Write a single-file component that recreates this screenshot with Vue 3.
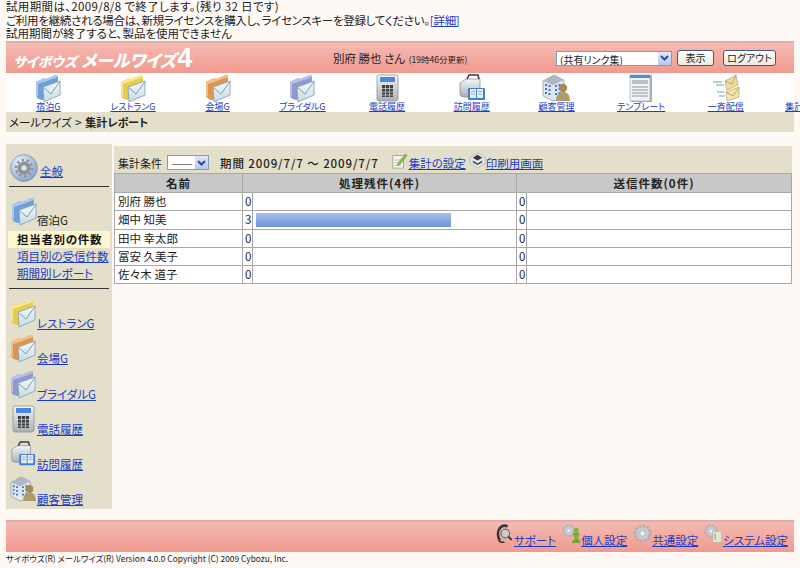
<script setup>
const navItems = [
  { label: '宿泊G', icon: 'folder', tone: 'blue' },
  { label: 'レストランG', icon: 'folder', tone: 'yellow' },
  { label: '会場G', icon: 'folder', tone: 'orange' },
  { label: 'ブライダルG', icon: 'folder', tone: 'purple' },
  { label: '電話履歴', icon: 'phone' },
  { label: '訪問履歴', icon: 'visit' },
  { label: '顧客管理', icon: 'customer' },
  { label: 'テンプレート', icon: 'template' },
  { label: '一斉配信', icon: 'bulk' },
  { label: '集計レポート', icon: 'none' }
]

const sideItems = navItems.slice(1, 7)

const rows = [
  { name: '別府 勝也', pending: 0, sent: 0 },
  { name: '畑中 知美', pending: 3, sent: 0 },
  { name: '田中 幸太郎', pending: 0, sent: 0 },
  { name: '冨安 久美子', pending: 0, sent: 0 },
  { name: '佐々木 道子', pending: 0, sent: 0 }
]
const maxPending = 4

const footerLinks = [
  { label: 'サポート', icon: 'support' },
  { label: '個人設定', icon: 'gear-user' },
  { label: '共通設定', icon: 'gear' },
  { label: 'システム設定', icon: 'gear-server' }
]
</script>

<template>
  <div class="page">
    <svg class="defs" width="0" height="0" aria-hidden="true">
      <defs>
        <linearGradient id="steel" x1="0" y1="0" x2="0" y2="1">
          <stop offset="0" stop-color="#f4f6f8" />
          <stop offset="1" stop-color="#a9b0b6" />
        </linearGradient>
        <linearGradient id="envelope" x1="0" y1="0" x2="0" y2="1">
          <stop offset="0" stop-color="#f4fafb" />
          <stop offset="1" stop-color="#c4dbe4" />
        </linearGradient>
        <radialGradient id="gearball" cx="0.35" cy="0.3" r="0.8">
          <stop offset="0" stop-color="#eef3fa" />
          <stop offset="1" stop-color="#7f9cc8" />
        </radialGradient>

        <symbol id="i-folder" viewBox="0 0 26 28">
          <path d="M1 8 L9 4 L11 5 L21 1 Q23 1 23 3 L23 18 L8 26 Q3 26 1 22 Z" fill="var(--tone)" />
          <path d="M1 8 L9 4 L11 5 L21 1 Q23 1 23 3 L12 7 L3 10 L3 23 Q1 22 1 20 Z" fill="var(--tone-light)" />
          <path d="M8 13 L25 7 L25 21 L9 28 Z" fill="url(#envelope)" stroke="#7d9dae" stroke-width="0.8" />
          <path d="M8.5 13.5 L16 20 L25 7.5" fill="none" stroke="#7d9dae" stroke-width="1" />
        </symbol>

        <symbol id="i-phone" viewBox="0 0 26 28">
          <rect x="3" y="1" width="21" height="26" rx="2" fill="url(#steel)" stroke="#8b9298" stroke-width="0.8" />
          <rect x="6" y="3" width="15" height="5" fill="#4d86e0" />
          <rect x="8" y="11" width="11" height="12" fill="#3c3f42" />
          <path d="M8 14.5 H19 M8 18 H19 M8 21 H19 M11.5 11 V23 M15.5 11 V23" stroke="#c8cbce" stroke-width="0.8" />
        </symbol>

        <symbol id="i-visit" viewBox="0 0 28 28">
          <path d="M2 9 L8 5 L22 5 L22 23 L6 23 Q2 23 2 20 Z" fill="url(#steel)" stroke="#8b9298" stroke-width="0.8" />
          <path d="M9 5 L11 1 L20 1 L21 5" fill="none" stroke="#3a3d40" stroke-width="1.6" />
          <rect x="10" y="14" width="17" height="12" rx="1" fill="#3f7fd0" />
          <rect x="12" y="15" width="6" height="9" fill="#e6eef5" />
          <rect x="19" y="15" width="6" height="9" fill="#e6eef5" />
          <path d="M13 17.5 H17 M13 20 H17 M20 17.5 H24 M20 20 H24" stroke="#7a93ab" stroke-width="0.7" />
        </symbol>

        <symbol id="i-customer" viewBox="0 0 28 28">
          <path d="M1 7 L12 1 L22 6 L22 24 L11 27 L1 22 Z" fill="#dfe6ee" stroke="#8b9298" stroke-width="0.7" />
          <path d="M1 7 L12 1 L22 6 L11 11 Z" fill="#aeb8c2" />
          <path d="M3 11 H5 M6.5 12 H8.5 M3 15 H5 M6.5 16 H8.5 M3 19 H5 M6.5 20 H8.5 M13 12 H15 M16.5 11 H18.5 M13 16 H15 M16.5 15 H18.5 M13 20 H15 M16.5 19 H18.5" stroke="#3e78d8" stroke-width="2" />
          <circle cx="21" cy="14" r="4.2" fill="#a58a55" />
          <path d="M14 27 Q14 18 21 18 Q28 18 28 27 Z" fill="#b09a68" />
        </symbol>

        <symbol id="i-template" viewBox="0 0 24 28">
          <rect x="2" y="1" width="21" height="27" fill="#a7b0b8" />
          <rect x="1" y="1" width="20" height="26" fill="#f1f3f4" stroke="#9aa3aa" stroke-width="0.6" />
          <rect x="1" y="1" width="20" height="3" fill="#4f8ce0" />
          <rect x="3" y="6" width="16" height="4" fill="#b9c0c6" />
          <path d="M3 13 H19 M3 16 H19 M3 19 H19 M3 22 H19" stroke="#8e969d" stroke-width="1" />
        </symbol>

        <symbol id="i-bulk" viewBox="0 0 28 28">
          <path d="M13 7 L24 1 L26 11 L15 16 Z" fill="#f0dc9a" stroke="#a99a60" stroke-width="0.6" />
          <path d="M13 7 L20 10 L24 1" fill="none" stroke="#a99a60" stroke-width="0.8" />
          <path d="M14 18 L27 13 L27 23 L15 27 Z" fill="#f3e5ae" stroke="#a99a60" stroke-width="0.6" />
          <path d="M14 18 L21 22 L27 13" fill="none" stroke="#a99a60" stroke-width="0.8" />
          <path d="M1 8 H10 M4 11 H12 M5 18 H12 M7 22 H13" stroke="#6fa8a0" stroke-width="1.2" />
        </symbol>

        <symbol id="i-gear" viewBox="0 0 28 28">
          <circle cx="14" cy="14" r="10" fill="#c8ccd0" stroke="#8f969c" stroke-width="0.6" />
          <circle cx="14" cy="14" r="12" fill="none" stroke="#a9afb4" stroke-width="3" stroke-dasharray="3.3 3" />
          <circle cx="14" cy="14" r="4" fill="#f2f3f4" stroke="#8f969c" stroke-width="0.8" />
        </symbol>

        <symbol id="i-gearball" viewBox="0 0 28 28">
          <circle cx="14" cy="14" r="13.5" fill="url(#gearball)" stroke="#6f88ad" stroke-width="0.6" />
          <circle cx="14" cy="14" r="6.5" fill="#8d9094" />
          <circle cx="14" cy="14" r="8" fill="none" stroke="#8d9094" stroke-width="2.5" stroke-dasharray="2.5 2.5" />
          <circle cx="14" cy="14" r="2.8" fill="#dfe3e7" />
        </symbol>

        <symbol id="i-gear-user" viewBox="0 0 28 28">
          <use href="#i-gear" x="0" y="0" width="20" height="20" />
          <circle cx="21" cy="9" r="3.5" fill="#7fb23a" />
          <path d="M16 17 Q16 12 21 12 Q26 12 26 17 Z" fill="#6fa62e" />
          <circle cx="21" cy="19" r="3.5" fill="#7fb23a" />
          <path d="M15 28 Q15 22 21 22 Q27 22 27 28 Z" fill="#6fa62e" />
        </symbol>

        <symbol id="i-gear-server" viewBox="0 0 28 28">
          <use href="#i-gear" x="0" y="0" width="21" height="21" />
          <rect x="13" y="11" width="13" height="16" fill="#e4e6dc" stroke="#9ea39a" stroke-width="0.7" />
          <rect x="15" y="14" width="3" height="9" fill="#b6c470" />
        </symbol>

        <symbol id="i-support" viewBox="0 0 20 24">
          <path d="M4 21 Q0 13 3 7 Q7 0 14 3" fill="none" stroke="#35383b" stroke-width="3.2" />
          <circle cx="11" cy="12" r="5.5" fill="#c6ccd2" stroke="#4a4e52" stroke-width="1.2" />
          <path d="M15 16 L19 20" stroke="#35383b" stroke-width="2.5" />
          <path d="M3 21 Q6 24 10 23" fill="none" stroke="#35383b" stroke-width="2" />
        </symbol>

        <symbol id="i-note" viewBox="0 0 18 18">
          <rect x="1" y="3" width="12" height="14" fill="#f6f6f2" stroke="#8c8f88" stroke-width="0.8" />
          <path d="M3 8 H10 M3 11 H9 M3 14 H10" stroke="#a8aba4" stroke-width="0.8" />
          <path d="M7 11 L15 1 L17 3 L9 13 L6 14 Z" fill="#8fc23a" stroke="#5f8a20" stroke-width="0.5" />
        </symbol>

        <symbol id="i-printer" viewBox="0 0 18 18">
          <path d="M1 6 L9 1 L17 5 L17 12 L9 17 L1 12 Z" fill="#e5e8ea" stroke="#9ea3a8" stroke-width="0.6" />
          <path d="M4 6 L9 3 L14 6 L9 9 Z" fill="#33363a" />
          <path d="M4 9 L9 12 L14 9 L14 11 L9 14 L4 11 Z" fill="#54585c" />
        </symbol>
      </defs>
    </svg>

    <div class="notice">
      <div class="notice-first">試用期間は、2009/8/8 で終了します。(残り 32 日です)</div>
      <div class="notice-second">ご利用を継続される場合は、新規ライセンスを購入し、ライセンスキーを登録してください。<a href="#">[詳細]</a></div>
      <div>試用期間が終了すると、製品を使用できません</div>
    </div>

    <header class="band header">
      <div class="logo">
        <span class="logo-small">サイボウズ</span><span class="logo-big">メールワイズ</span><span class="logo-four">4</span>
      </div>
      <div class="user">
        別府 勝也 さん <small>(19時46分更新)</small>
      </div>
      <div class="tools">
        <div class="combo combo-links">
          <select>
            <option>(共有リンク集)</option>
          </select>
          <span class="combo-arrow">
            <svg width="9" height="6" viewBox="0 0 9 6"><path d="M1 1 L4.5 4.5 L8 1" fill="none" stroke="#2f4f8f" stroke-width="2" /></svg>
          </span>
        </div>
        <button class="btn btn-show">表示</button>
        <button class="btn btn-logout">ログアウト</button>
      </div>
    </header>

    <nav class="nav">
      <a v-for="item in navItems" :key="item.label" href="#" class="nav-item" :class="item.tone">
        <svg v-if="item.icon !== 'none'" class="nav-icon" width="28" height="28"><use :href="'#i-' + item.icon" /></svg>
        <span v-else class="nav-icon"></span>
        <span class="nav-label">{{ item.label }}</span>
      </a>
    </nav>

    <div class="crumb">メールワイズ &gt; <b>集計レポート</b></div>

    <div class="body-row">
      <aside class="side">
        <div class="side-entry side-first">
          <svg width="28" height="28"><use href="#i-gearball" /></svg>
          <a href="#">全般</a>
        </div>
        <hr />
        <div class="side-entry side-current blue">
          <svg width="26" height="28"><use href="#i-folder" /></svg>
          <span>宿泊G</span>
        </div>
        <ul class="side-menu">
          <li class="active">担当者別の件数</li>
          <li><a href="#">項目別の受信件数</a></li>
          <li><a href="#">期間別レポート</a></li>
        </ul>
        <hr />
        <div class="side-list">
          <div v-for="item in sideItems" :key="item.label" class="side-entry" :class="item.tone">
            <svg width="26" height="28"><use :href="'#i-' + item.icon" /></svg>
            <a href="#">{{ item.label }}</a>
          </div>
        </div>
      </aside>

      <main class="main">
        <div class="toolbar">
          <span class="cond">集計条件</span>
          <div class="combo combo-cond">
            <select>
              <option>――</option>
            </select>
            <span class="combo-arrow">
              <svg width="9" height="6" viewBox="0 0 9 6"><path d="M1 1 L4.5 4.5 L8 1" fill="none" stroke="#2f4f8f" stroke-width="2" /></svg>
            </span>
          </div>
          <span class="period">期間 2009/7/7 ～ 2009/7/7</span>
          <svg class="tool-icon first" width="16" height="16"><use href="#i-note" /></svg>
          <a href="#">集計の設定</a>
          <svg class="tool-icon" width="17" height="17"><use href="#i-printer" /></svg>
          <a href="#">印刷用画面</a>
        </div>

        <table class="report">
          <colgroup>
            <col class="c-name" />
            <col class="c-num" />
            <col class="c-bar" />
            <col class="c-num" />
            <col />
          </colgroup>
          <thead>
            <tr>
              <th>名前</th>
              <th colspan="2">処理残件(4件)</th>
              <th colspan="2">送信件数(0件)</th>
            </tr>
          </thead>
          <tbody>
            <tr v-for="row in rows" :key="row.name">
              <td>{{ row.name }}</td>
              <td>{{ row.pending }}</td>
              <td class="bar-cell">
                <div v-if="row.pending" class="bar" :style="{ width: (row.pending / maxPending) * 100 + '%' }"></div>
              </td>
              <td>{{ row.sent }}</td>
              <td></td>
            </tr>
          </tbody>
        </table>
      </main>
    </div>

    <div class="band footer">
      <span v-for="link in footerLinks" :key="link.label" class="foot-link">
        <svg width="19" height="19"><use :href="'#i-' + link.icon" /></svg>
        <a href="#">{{ link.label }}</a>
      </span>
    </div>

    <div class="copyright">サイボウズ(R) メールワイズ(R) Version 4.0.0 Copyright (C) 2009 Cybozu, Inc.</div>
  </div>
</template>

<style>
html, body {
  background: #fef9f4;
  overflow: hidden;
}
</style>

<style scoped>
.page {
  width: 800px;
  height: 568px;
  box-sizing: border-box;
  padding: 0 6px;
  overflow: hidden;
  font-family: "Noto Sans CJK JP", "Liberation Sans", sans-serif;
  font-size: 11.5px;
  font-feature-settings: "palt";
  color: #222;
  background: #fef9f4;
}

a {
  color: #1a3cc8;
  text-decoration: underline;
}

.defs {
  position: absolute;
}

.notice {
  height: 41px;
  line-height: 13.7px;
  white-space: nowrap;
}

.notice-first {
  letter-spacing: 0.35px;
}

.notice-second {
  letter-spacing: -0.28px;
}

.band {
  background: linear-gradient(#f5bab2, #f09a8e);
  border-top: 2px solid #dcaea8;
  box-sizing: border-box;
}

.header {
  height: 32px;
  display: flex;
  align-items: center;
}

.logo {
  width: 327px;
  padding-left: 7px;
  box-sizing: border-box;
  color: #fff;
  font-weight: 900;
  font-style: italic;
  white-space: nowrap;
  line-height: 1;
}

.logo-small {
  font-size: 13.5px;
  margin-right: 4px;
}

.logo-big {
  font-size: 17px;
}

.logo-four {
  font-family: "Liberation Sans", sans-serif;
  font-size: 27px;
  font-style: normal;
  margin-left: 1px;
}

.user {
  width: 223px;
  white-space: nowrap;
}

.user small {
  font-size: 8.5px;
  margin-left: 1px;
}

.tools {
  display: flex;
  align-items: center;
}

.combo {
  position: relative;
  height: 15px;
}

.combo select {
  appearance: none;
  width: 100%;
  height: 100%;
  padding: 0 0 0 3px;
  margin: 0;
  box-sizing: border-box;
  border: 1px solid #7f9db9;
  border-radius: 0;
  background: #fff;
  color: #222;
  font: 10px "Noto Sans CJK JP", sans-serif;
  font-feature-settings: "palt";
}

.combo-arrow {
  position: absolute;
  top: 1px;
  right: 1px;
  bottom: 1px;
  width: 13px;
  background: linear-gradient(#dfe8fb, #b4c8f0);
  display: flex;
  align-items: center;
  justify-content: center;
}

.combo-links {
  width: 116px;
}

.btn {
  height: 16px;
  padding: 0;
  box-sizing: border-box;
  border: 1px solid #3d5a80;
  border-radius: 3px;
  background: linear-gradient(#fff, #eceadf);
  color: #222;
  font: 10px "Noto Sans CJK JP", sans-serif;
  font-feature-settings: "palt";
  line-height: 1;
}

.btn-show {
  width: 37px;
  margin-left: 5px;
}

.btn-logout {
  width: 53px;
  margin-left: 9px;
}

.nav {
  height: 39px;
  display: flex;
  background: #fff;
}

.nav-item {
  flex: 0 0 84.7px;
  display: flex;
  flex-direction: column;
  align-items: center;
  font-size: 9px;
  white-space: nowrap;
}

.nav-icon {
  display: block;
  height: 28px;
  margin-top: 1px;
  flex: none;
}

.nav-label {
  line-height: 10px;
  text-decoration: underline;
}

.blue {
  --tone: #6f9fdc;
  --tone-light: #a8c8ee;
}

.yellow {
  --tone: #e8cc4a;
  --tone-light: #f6e692;
}

.orange {
  --tone: #e0964a;
  --tone-light: #f0c08a;
}

.purple {
  --tone: #8f9ad0;
  --tone-light: #bcc0e2;
}

.crumb {
  height: 20px;
  line-height: 20px;
  padding-left: 3px;
  background: #e4dfca;
  word-spacing: 1px;
}

.crumb b {
  font-size: 11px;
}

.body-row {
  display: flex;
  align-items: flex-start;
  margin-top: 12px;
}

.side {
  width: 106px;
  height: 365px;
  flex: none;
  background: #e4dfca;
}

.side hr {
  height: 1px;
  margin: 0 3px;
  border: 0;
  background: #333;
}

.side-list {
  margin-top: 7px;
}

.side-entry {
  height: 35.2px;
  display: flex;
  align-items: flex-end;
  padding-left: 4px;
  box-sizing: border-box;
  white-space: nowrap;
  line-height: 14px;
}

.side-entry svg {
  flex: none;
  margin-bottom: 4px;
}

.side-entry > a,
.side-entry > span {
  margin-bottom: 1px;
  margin-left: 1px;
}

.side-first {
  height: 42px;
}

.side-first svg {
  margin-bottom: 4px;
}

.side-first > a {
  margin-left: 2px;
  margin-bottom: 8px;
}

.side-current {
  height: 44px;
  padding-left: 5px;
}

.side-current svg {
  margin-bottom: 6px;
}

.side-current > span {
  margin-bottom: 4px;
  margin-left: 0;
}

.side-menu {
  list-style: none;
  margin: 0 0 6px;
  padding: 0;
  line-height: 17px;
}

.side-menu li {
  margin: 0 2px;
  padding-left: 9px;
  white-space: nowrap;
}

.side-menu .active {
  background: #fdf8d0;
  font-weight: 700;
  letter-spacing: 0.7px;
  color: #111;
}

.main {
  width: 678px;
  margin: 2px 0 0 2px;
  flex: none;
}

.toolbar {
  height: 27px;
  background: #e4dfca;
  display: flex;
  align-items: flex-end;
  padding: 0 0 2px 4px;
  box-sizing: border-box;
  white-space: nowrap;
  line-height: 16px;
}

.cond {
  font-size: 11px;
}

.combo-cond {
  width: 42px;
  margin: 0 11px 1px 5px;
}

.combo-cond select {
  color: #111;
  font-size: 11px;
}

.period {
  font-weight: 500;
  letter-spacing: 0.9px;
}

.tool-icon {
  margin-bottom: 2px;
  margin-left: 3px;
}

.tool-icon.first {
  margin-left: 13px;
  margin-right: 1px;
}

.report {
  width: 678px;
  border-collapse: collapse;
  table-layout: fixed;
  background: #fff;
}

.c-name {
  width: 128px;
}

.c-num {
  width: 10px;
}

.c-bar {
  width: 264px;
}

.report th,
.report td {
  border: 1px solid #a9a9a9;
  padding: 0 0 0 3px;
  height: 17.3px;
  line-height: 17px;
  font-weight: 400;
  white-space: nowrap;
}

.report td:nth-child(2),
.report td:nth-child(4) {
  padding-left: 2px;
}

.report th {
  height: 18px;
  padding: 0;
  background: #c8c8c8;
  font-weight: 700;
  letter-spacing: 1px;
  text-align: center;
}

.bar {
  height: 14px;
  background: linear-gradient(#a6c0ea, #6c92d8);
}

.footer {
  height: 32px;
  margin-top: 11px;
  display: flex;
  align-items: flex-end;
  justify-content: flex-end;
  padding: 0 6px 5px 0;
}

.foot-link {
  display: flex;
  align-items: flex-end;
  margin-left: 6px;
  line-height: 14px;
}

.foot-link svg {
  margin-bottom: 4px;
}

.copyright {
  font-size: 8.4px;
  line-height: 13px;
  white-space: nowrap;
}
</style>
